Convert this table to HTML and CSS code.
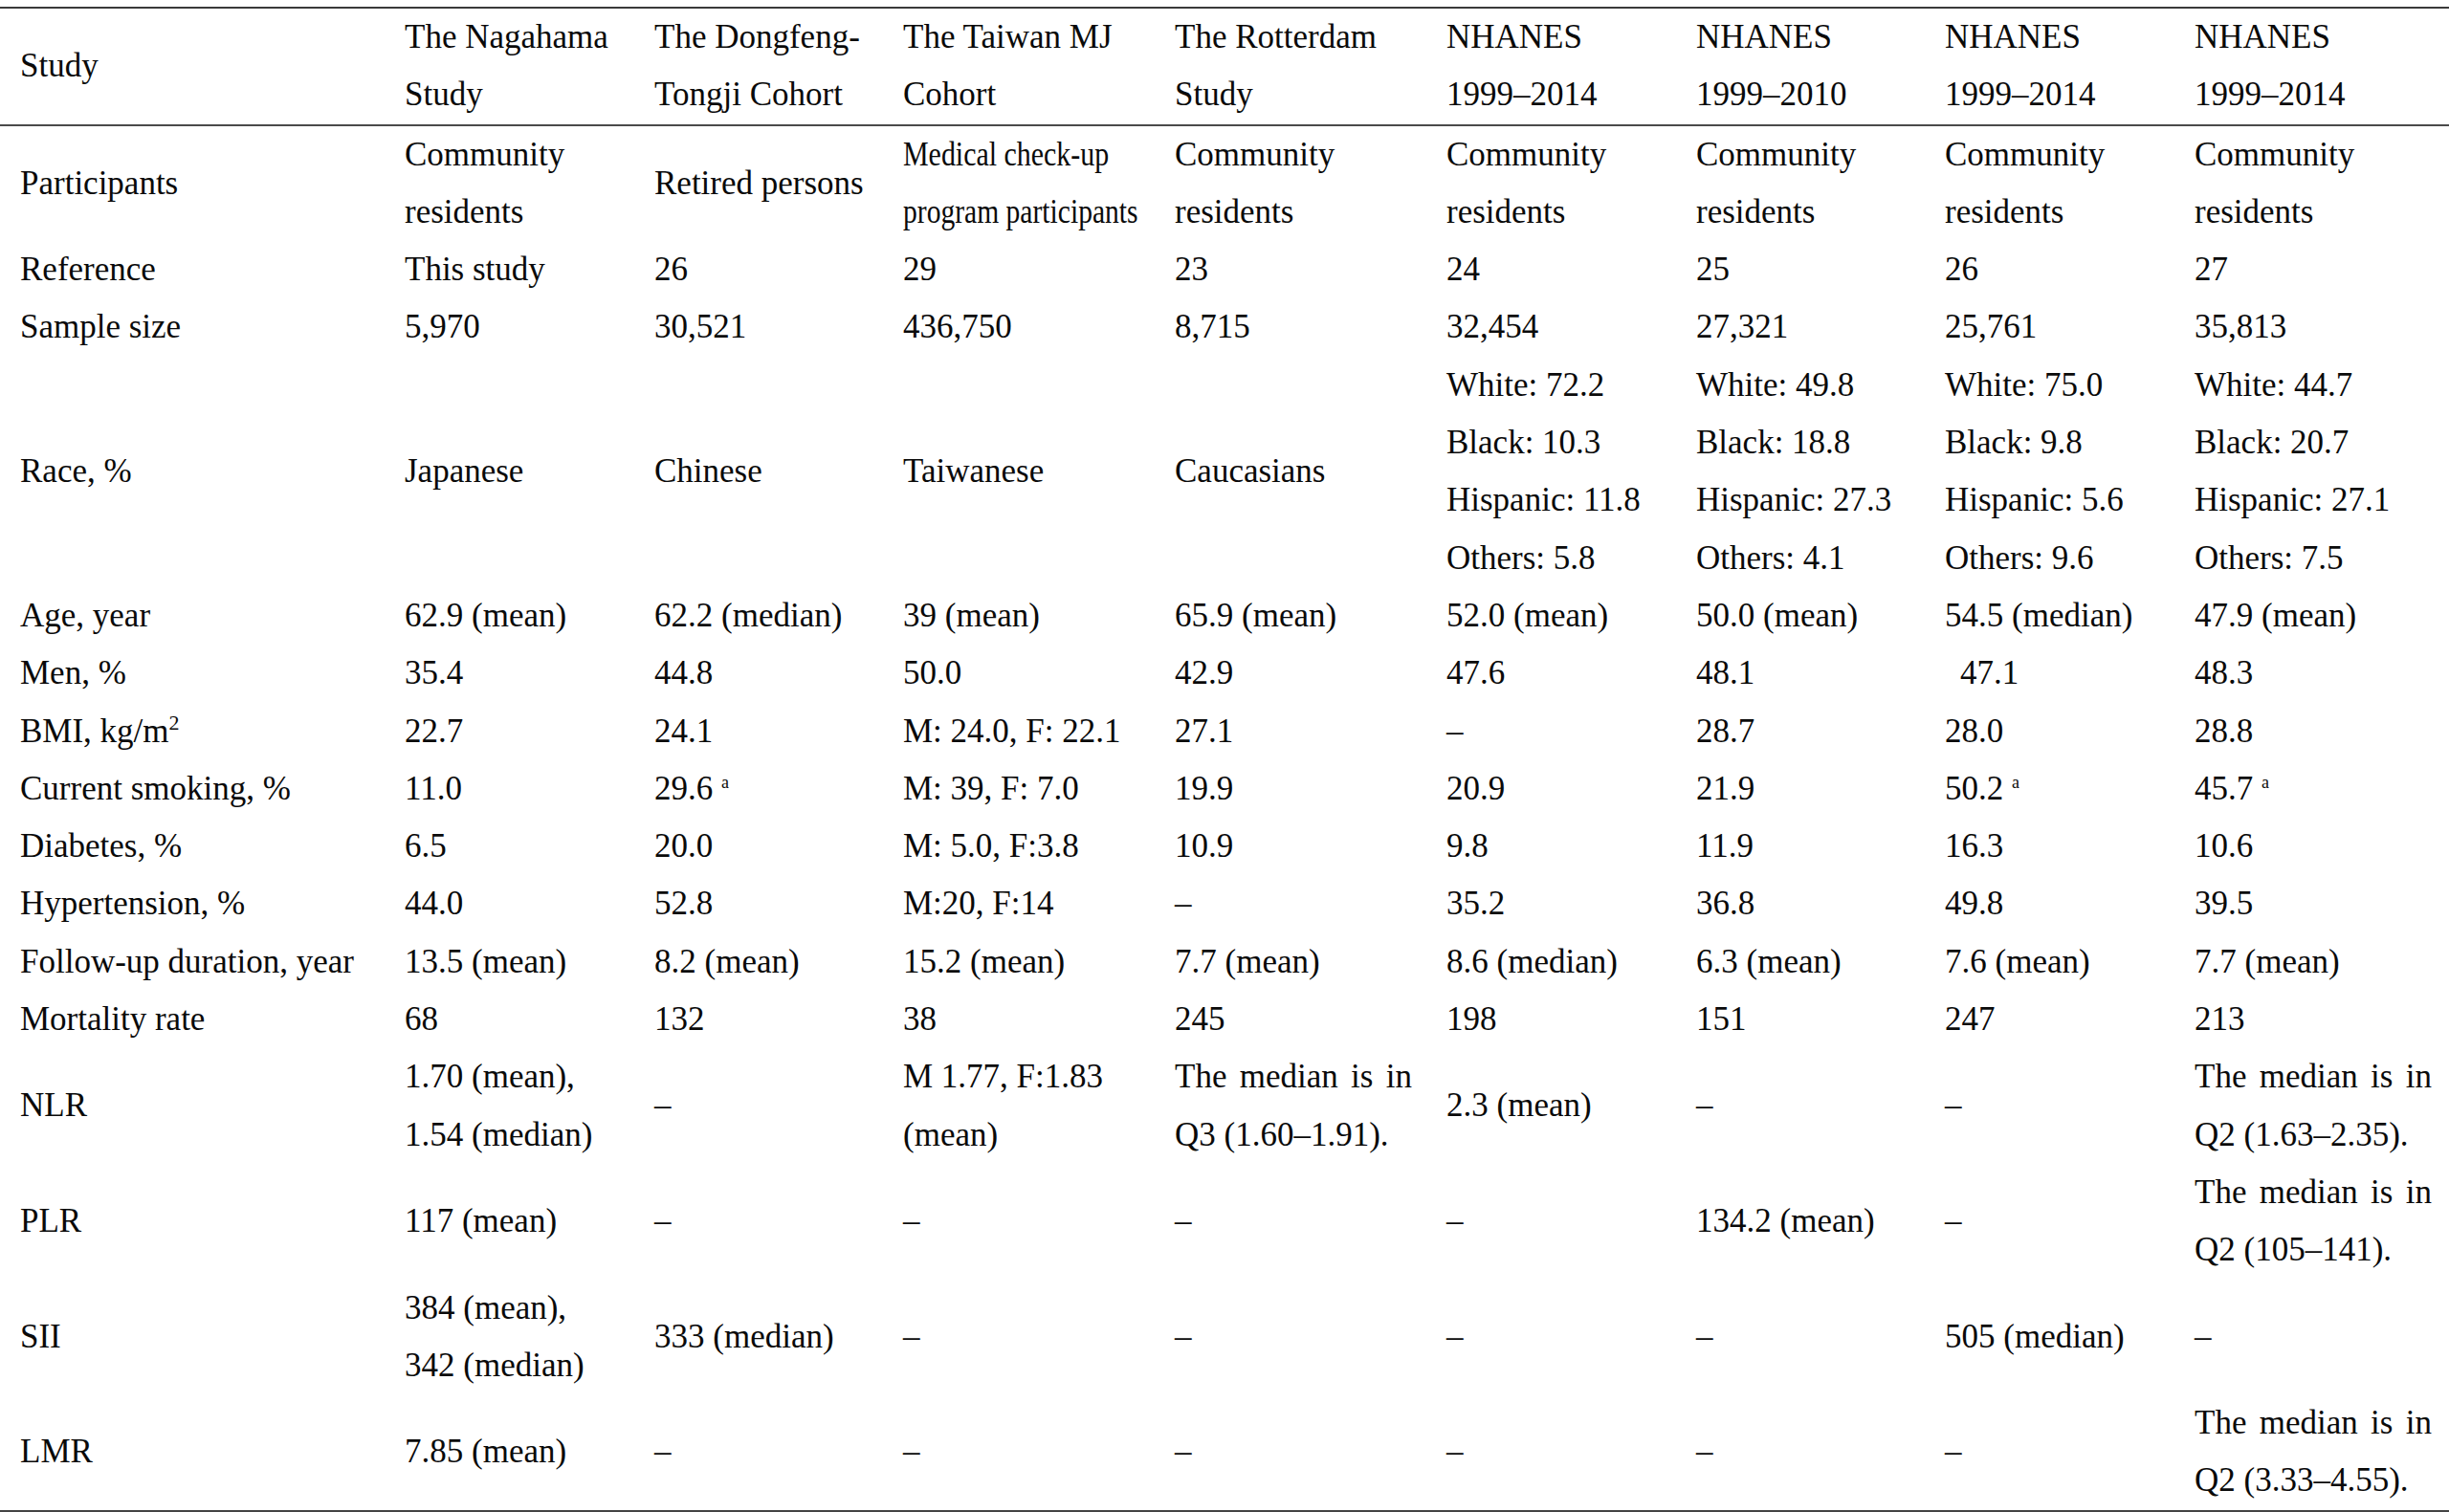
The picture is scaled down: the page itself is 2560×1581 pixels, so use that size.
FILE: index.html
```html
<!DOCTYPE html>
<html lang="en">
<head>
<meta charset="utf-8">
<title>Study comparison</title>
<link rel="stylesheet" href="styles.css">
</head>
<body>
<table class="tbl">
<colgroup>
<col class="c0"><col class="c1"><col class="c2"><col class="c3"><col class="c4"><col class="c5"><col class="c6"><col class="c7"><col class="c8">
</colgroup>
<thead>
<tr>
<th>Study</th>
<th>The Nagahama<br>Study</th>
<th>The Dongfeng-<br>Tongji Cohort</th>
<th>The Taiwan MJ<br>Cohort</th>
<th>The Rotterdam<br>Study</th>
<th>NHANES<br>1999–2014</th>
<th>NHANES<br>1999–2010</th>
<th>NHANES<br>1999–2014</th>
<th>NHANES<br>1999–2014</th>
</tr>
</thead>
<tbody>
<tr>
<td>Participants</td>
<td>Community<br>residents</td>
<td>Retired persons</td>
<td><span class="cond c-a">Medical check-up</span><br><span class="cond c-b">program participants</span></td>
<td>Community<br>residents</td>
<td>Community<br>residents</td>
<td>Community<br>residents</td>
<td>Community<br>residents</td>
<td>Community<br>residents</td>
</tr>
<tr>
<td>Reference</td><td>This study</td><td>26</td><td>29</td><td>23</td><td>24</td><td>25</td><td>26</td><td>27</td>
</tr>
<tr>
<td>Sample size</td><td>5,970</td><td>30,521</td><td>436,750</td><td>8,715</td><td>32,454</td><td>27,321</td><td>25,761</td><td>35,813</td>
</tr>
<tr>
<td>Race, %</td><td>Japanese</td><td>Chinese</td><td>Taiwanese</td><td>Caucasians</td>
<td>White: 72.2<br>Black: 10.3<br>Hispanic: 11.8<br>Others: 5.8</td>
<td>White: 49.8<br>Black: 18.8<br>Hispanic: 27.3<br>Others: 4.1</td>
<td>White: 75.0<br>Black: 9.8<br>Hispanic: 5.6<br>Others: 9.6</td>
<td>White: 44.7<br>Black: 20.7<br>Hispanic: 27.1<br>Others: 7.5</td>
</tr>
<tr>
<td>Age, year</td><td>62.9 (mean)</td><td>62.2 (median)</td><td>39 (mean)</td><td>65.9 (mean)</td><td>52.0 (mean)</td><td>50.0 (mean)</td><td>54.5 (median)</td><td>47.9 (mean)</td>
</tr>
<tr>
<td>Men, %</td><td>35.4</td><td>44.8</td><td>50.0</td><td>42.9</td><td>47.6</td><td>48.1</td><td><span class="indent">47.1</span></td><td>48.3</td>
</tr>
<tr>
<td>BMI, kg/m<sup class="sq">2</sup></td><td>22.7</td><td>24.1</td><td>M: 24.0, F: 22.1</td><td>27.1</td><td>–</td><td>28.7</td><td>28.0</td><td>28.8</td>
</tr>
<tr>
<td>Current smoking, %</td><td>11.0</td><td>29.6 <sup class="fn">a</sup></td><td>M: 39, F: 7.0</td><td>19.9</td><td>20.9</td><td>21.9</td><td>50.2 <sup class="fn">a</sup></td><td>45.7 <sup class="fn">a</sup></td>
</tr>
<tr>
<td>Diabetes, %</td><td>6.5</td><td>20.0</td><td>M: 5.0, F:3.8</td><td>10.9</td><td>9.8</td><td>11.9</td><td>16.3</td><td>10.6</td>
</tr>
<tr>
<td>Hypertension, %</td><td>44.0</td><td>52.8</td><td>M:20, F:14</td><td>–</td><td>35.2</td><td>36.8</td><td>49.8</td><td>39.5</td>
</tr>
<tr>
<td>Follow-up duration, year</td><td>13.5 (mean)</td><td>8.2 (mean)</td><td>15.2 (mean)</td><td>7.7 (mean)</td><td>8.6 (median)</td><td>6.3 (mean)</td><td>7.6 (mean)</td><td>7.7 (mean)</td>
</tr>
<tr>
<td>Mortality rate</td><td>68</td><td>132</td><td>38</td><td>245</td><td>198</td><td>151</td><td>247</td><td>213</td>
</tr>
<tr>
<td>NLR</td><td>1.70 (mean),<br>1.54 (median)</td><td>–</td><td>M 1.77, F:1.83<br>(mean)</td>
<td><span class="jl">The median is in</span>Q3 (1.60–1.91).</td>
<td>2.3 (mean)</td><td>–</td><td>–</td>
<td><span class="jl">The median is in</span>Q2 (1.63–2.35).</td>
</tr>
<tr>
<td>PLR</td><td>117 (mean)</td><td>–</td><td>–</td><td>–</td><td>–</td><td>134.2 (mean)</td><td>–</td>
<td><span class="jl">The median is in</span>Q2 (105–141).</td>
</tr>
<tr>
<td>SII</td><td>384 (mean),<br>342 (median)</td><td>333 (median)</td><td>–</td><td>–</td><td>–</td><td>–</td><td>505 (median)</td><td>–</td>
</tr>
<tr>
<td>LMR</td><td>7.85 (mean)</td><td>–</td><td>–</td><td>–</td><td>–</td><td>–</td><td>–</td>
<td><span class="jl">The median is in</span>Q2 (3.33–4.55).</td>
</tr>
</tbody>
</table>
</body>
</html>
```
FILE: styles.css
```css
html, body {
  margin: 0;
  padding: 0;
  background: #ffffff;
  overflow: hidden;
}
body {
  padding-top: 7px;
  font-family: "Liberation Serif", "Times New Roman", serif;
  font-size: 35px;
  color: #0a0a0a;
}
.tbl {
  width: 2560px;
  border-collapse: collapse;
  table-layout: fixed;
  border-top: 2px solid #3a3a3a;
  border-bottom: 3px solid #444444;
}
.c0 { width: 403px; }
.c1 { width: 261px; }
.c2 { width: 260px; }
.c3 { width: 284px; }
.c4 { width: 284px; }
.c5 { width: 261px; }
.c6 { width: 260px; }
.c7 { width: 261px; }
.c8 { width: 286px; }
.tbl th,
.tbl td {
  padding: 0 0 0 20px;
  line-height: 60.3px;
  text-align: left;
  vertical-align: middle;
  font-weight: normal;
  white-space: nowrap;
}
.tbl th:first-child,
.tbl td:first-child {
  padding-left: 21px;
}
.tbl thead tr {
  border-bottom: 2px solid #4a4a4a;
}
.cond {
  display: inline-block;
  transform-origin: left center;
}
.c-a { transform: scaleX(0.855); }
.c-b { transform: scaleX(0.845); }
.indent {
  padding-left: 16px;
}
.jl {
  display: block;
  width: 248px;
  text-align: justify;
  text-align-last: justify;
}
.sq {
  font-size: 22px;
  line-height: 0;
  vertical-align: 13px;
}
.fn {
  font-size: 18px;
  line-height: 0;
  vertical-align: 12px;
}
```
